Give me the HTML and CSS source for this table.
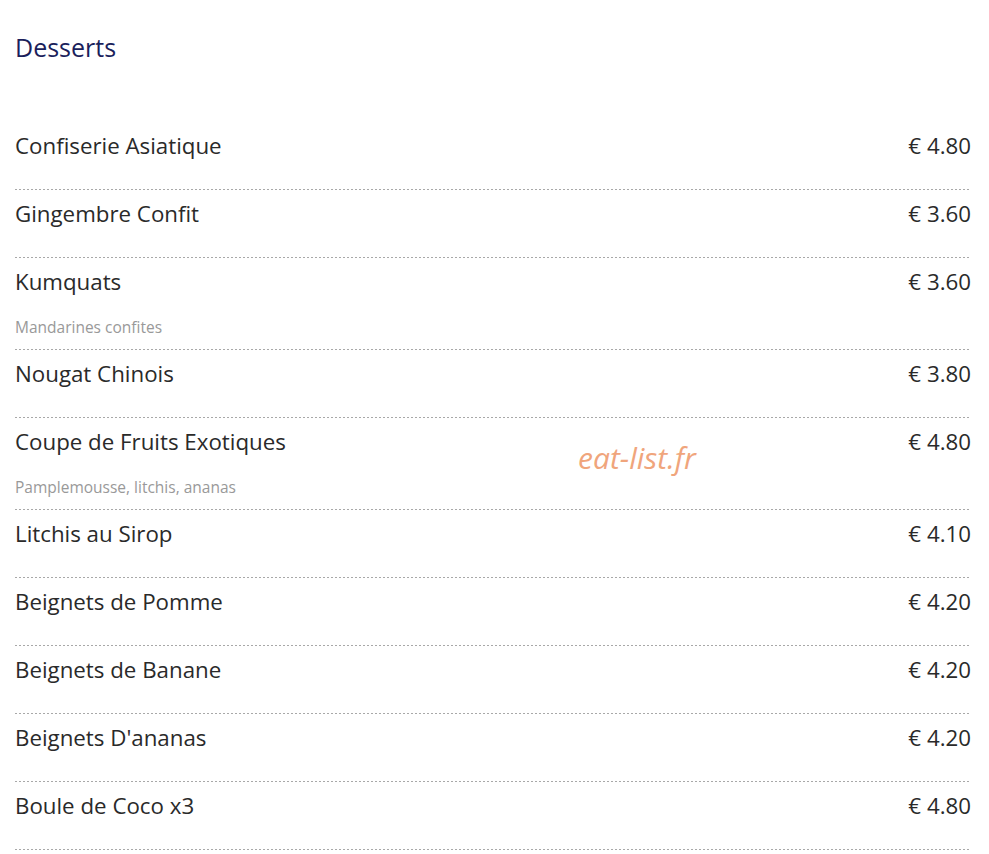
FILE: index.html
```html
<!DOCTYPE html>
<html lang="fr">
<head>
	<meta charset="UTF-8">
	<title>Desserts</title>
	<link rel="stylesheet" href="styles.css">
</head>
<body>
	<div class="menu">
		<h2 class="sectionTitle">Desserts</h2>
		<ul class="dishList">
			<li class="dish">
				<div class="dishLine"><span class="dishName">Confiserie Asiatique</span><span class="dishPrice">€ 4.80</span></div>
			</li>
			<li class="dish">
				<div class="dishLine"><span class="dishName">Gingembre Confit</span><span class="dishPrice">€ 3.60</span></div>
			</li>
			<li class="dish">
				<div class="dishLine"><span class="dishName">Kumquats</span><span class="dishPrice">€ 3.60</span></div>
				<p class="dishDesc">Mandarines confites</p>
			</li>
			<li class="dish">
				<div class="dishLine"><span class="dishName">Nougat Chinois</span><span class="dishPrice">€ 3.80</span></div>
			</li>
			<li class="dish">
				<div class="dishLine"><span class="dishName">Coupe de Fruits Exotiques</span><span class="dishPrice">€ 4.80</span></div>
				<p class="dishDesc">Pamplemousse, litchis, ananas</p>
			</li>
			<li class="dish">
				<div class="dishLine"><span class="dishName">Litchis au Sirop</span><span class="dishPrice">€ 4.10</span></div>
			</li>
			<li class="dish">
				<div class="dishLine"><span class="dishName">Beignets de Pomme</span><span class="dishPrice">€ 4.20</span></div>
			</li>
			<li class="dish">
				<div class="dishLine"><span class="dishName">Beignets de Banane</span><span class="dishPrice">€ 4.20</span></div>
			</li>
			<li class="dish">
				<div class="dishLine"><span class="dishName">Beignets D'ananas</span><span class="dishPrice">€ 4.20</span></div>
			</li>
			<li class="dish">
				<div class="dishLine"><span class="dishName">Boule de Coco x3</span><span class="dishPrice">€ 4.80</span></div>
			</li>
		</ul>
		<div class="watermark">eat-list.fr</div>
	</div>
</body>
</html>
```

FILE: styles.css
```css
body {
	margin: 0px;
	background-color: #fff;
	font-family: "Open Sans", "Noto Sans", sans-serif;
	color: #2a2a2a;
}
.menu{
	position: relative;
	padding: 0px 18px 0px 15px;
}
.sectionTitle{
	margin: 0px;
	padding-top: 32px;
	height: 122px;
	box-sizing: border-box;
	font-size: 25px;
	font-weight: normal;
	line-height: 30px;
	color: #1b1f5c;
}
.dishList{
	list-style: none;
	margin: 0px;
	padding: 0px;
}
.dish{
	padding: 8px 0px 13px;
	background-image: linear-gradient(to right, #a8a8a8 50%, transparent 50%);
	background-size: 4px 1px;
	background-repeat: repeat-x;
	background-position: left bottom;
}
.dishLine{
	display: flex;
	justify-content: space-between;
	align-items: center;
	height: 30px;
	margin-bottom: 17px;
}
.dishName{
	font-size: 22.3px;
}
.dishPrice{
	font-size: 22.3px;
}
.dishDesc{
	margin: 4px 0px 0px;
	font-size: 15.5px;
	line-height: 20px;
	color: #999;
	margin-top: -13px;
	padding-top: 17px;
}
.watermark{
	position: absolute;
	left: 578px;
	top: 437px;
	font-size: 30px;
	font-style: italic;
	color: #f0a57c;
}
```
